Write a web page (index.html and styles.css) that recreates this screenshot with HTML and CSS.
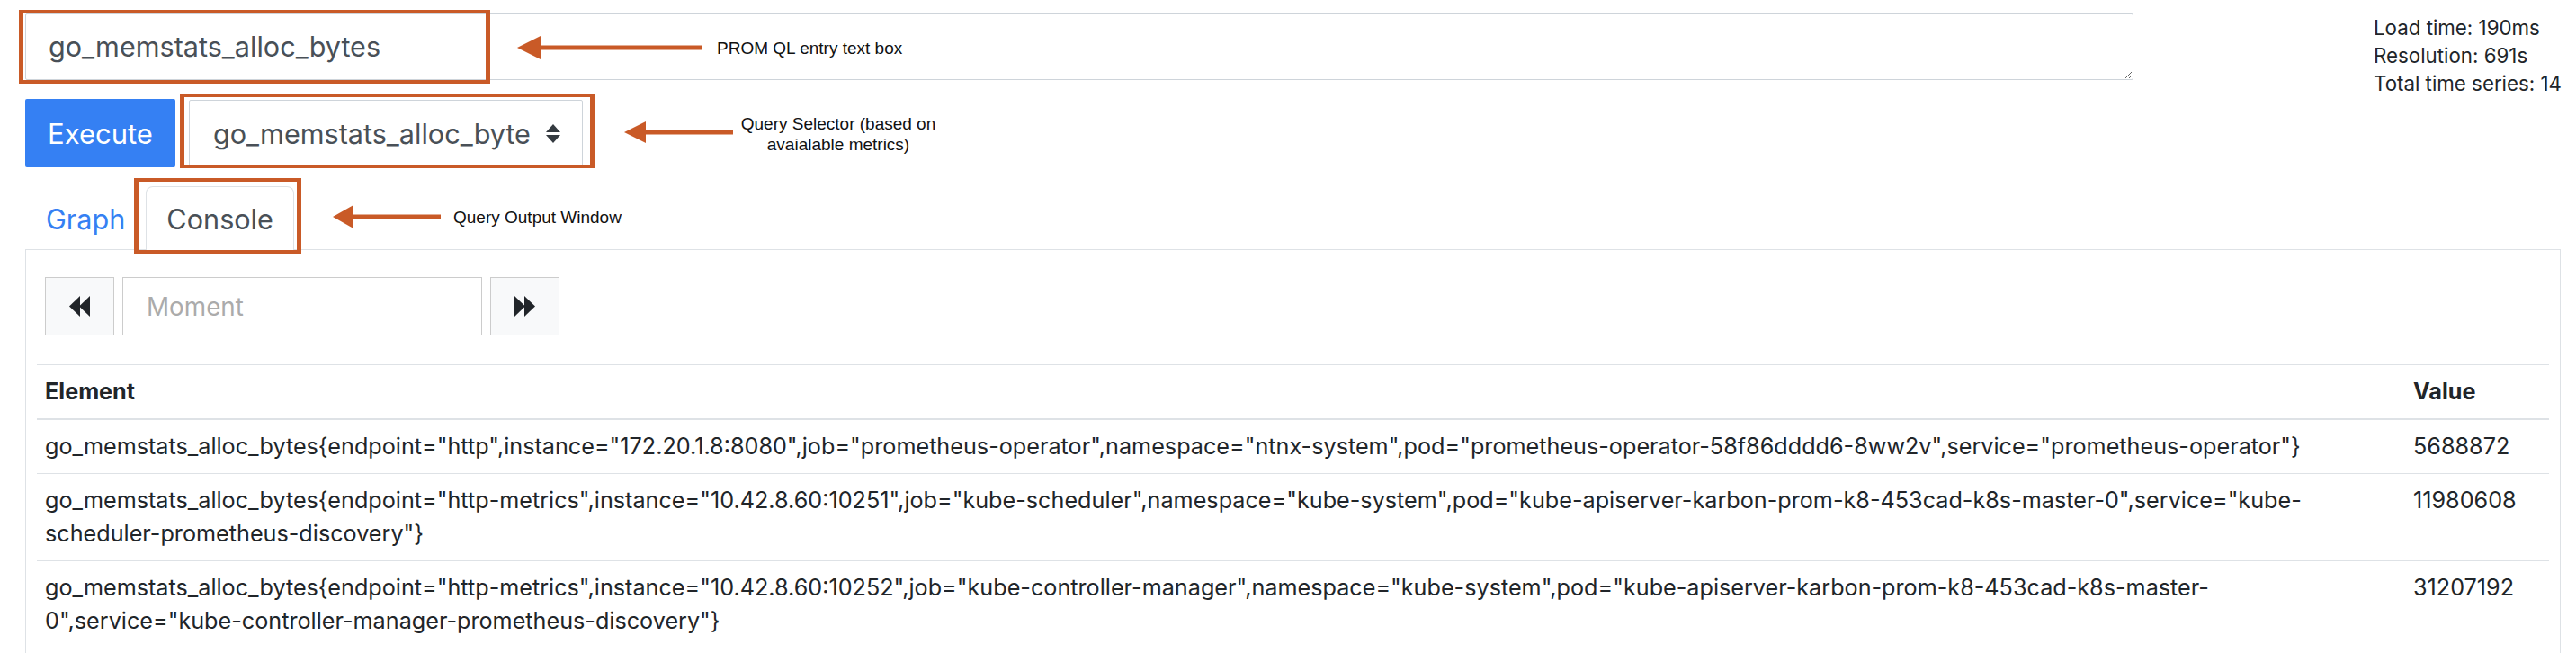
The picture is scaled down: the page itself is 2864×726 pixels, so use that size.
FILE: index.html
```html
<!DOCTYPE html>
<html lang="en">
<head>
<meta charset="utf-8">
<title>Prometheus console</title>
<link rel="stylesheet" href="styles.css">
</head>
<body>
<div class="page">
  <div class="top">
    <div class="main">
      <textarea class="expr" rows="1">go_memstats_alloc_bytes</textarea>
      <div class="exec-row">
        <button class="btn-exec">Execute</button>
        <div class="metric-select">
          <span class="metric-text">go_memstats_alloc_bytes</span>
          <svg class="sel-caret" width="16" height="21" viewBox="0 0 16 21"><polygon points="8,0 16,9 0,9"/><polygon points="0,12 16,12 8,21"/></svg>
        </div>
      </div>
    </div>
    <div class="stats">
      <div>Load time: 190ms</div>
      <div>Resolution: 691s</div>
      <div>Total time series: 14</div>
    </div>
  </div>

  <div class="tabs">
    <a class="tab">Graph</a>
    <a class="tab active">Console</a>
  </div>

  <div class="panel">
    <div class="moment-row">
      <button class="moment-btn"><svg width="23" height="23" viewBox="0 0 23 23"><polygon points="0,11.5 12,0 12,23"/><polygon points="11,11.5 23,0 23,23"/></svg></button>
      <input class="moment-input" placeholder="Moment">
      <button class="moment-btn"><svg width="23" height="23" viewBox="0 0 23 23"><polygon points="23,11.5 11,0 11,23"/><polygon points="12,11.5 0,0 0,23"/></svg></button>
    </div>
    <table class="results">
      <thead>
        <tr><th>Element</th><th class="val">Value</th></tr>
      </thead>
      <tbody>
        <tr><td>go_memstats_alloc_bytes{endpoint="http",instance="172.20.1.8:8080",job="prometheus-operator",namespace="ntnx-system",pod="prometheus-operator-58f86dddd6-8ww2v",service="prometheus-operator"}</td><td class="val">5688872</td></tr>
        <tr><td>go_memstats_alloc_bytes{endpoint="http-metrics",instance="10.42.8.60:10251",job="kube-scheduler",namespace="kube-system",pod="kube-apiserver-karbon-prom-k8-453cad-k8s-master-0",service="kube-scheduler-prometheus-discovery"}</td><td class="val">11980608</td></tr>
        <tr><td>go_memstats_alloc_bytes{endpoint="http-metrics",instance="10.42.8.60:10252",job="kube-controller-manager",namespace="kube-system",pod="kube-apiserver-karbon-prom-k8-453cad-k8s-master-0",service="kube-controller-manager-prometheus-discovery"}</td><td class="val">31207192</td></tr>
      </tbody>
    </table>
  </div>

  <div class="hl hl-expr"></div>
  <div class="hl hl-select"></div>
  <div class="hl hl-tab"></div>

  <svg class="arrow arrow-1" width="205" height="26" viewBox="0 0 205 26"><polygon points="0,13 26,0 26,26"/><rect x="24" y="10.5" width="181" height="5"/></svg>
  <svg class="arrow arrow-2" width="121" height="24" viewBox="0 0 121 24"><polygon points="0,12 24,0 24,24"/><rect x="22" y="9.5" width="99" height="5"/></svg>
  <svg class="arrow arrow-3" width="120" height="26" viewBox="0 0 120 26"><polygon points="0,13 23,0 23,26"/><rect x="21" y="10.5" width="99" height="5"/></svg>

  <div class="note note-1">PROM QL entry text box</div>
  <div class="note note-2">Query Selector (based on<br>avaialable metrics)</div>
  <div class="note note-3">Query Output Window</div>
</div>
</body>
</html>
```

FILE: styles.css
```css
* { box-sizing: border-box; }

html, body {
  margin: 0;
  background: #fff;
}

body {
  font-family: "Inter", "Liberation Sans", sans-serif;
  color: #212529;
}

.page {
  position: relative;
  width: 2864px;
  height: 726px;
  padding: 15px 0 0 28px;
  overflow: hidden;
}

.top {
  display: flex;
}

.main {
  width: 2344px;
  flex: none;
}

.expr {
  display: block;
  width: 100%;
  height: 74px;
  margin: 0;
  padding: 17px 25px 0;
  border: 1px solid #ced4da;
  border-radius: 2px;
  font-family: inherit;
  font-size: 30.6px;
  line-height: 38px;
  color: #495057;
  resize: vertical;
  outline: none;
}

.exec-row {
  display: flex;
  margin-top: 21px;
}

.btn-exec {
  width: 167px;
  height: 76px;
  padding: 0;
  border: none;
  border-radius: 2px;
  background: #3580f3;
  color: #fff;
  font-family: inherit;
  font-size: 31px;
}

.metric-select {
  display: flex;
  align-items: center;
  width: 438px;
  height: 74px;
  margin: 1px 0 0 15px;
  padding-left: 26px;
  border: 1px solid #ced4da;
  border-radius: 2px;
  font-size: 30.6px;
  color: #495057;
}

.metric-text {
  width: 354px;
  overflow: hidden;
  white-space: nowrap;
}

.sel-caret {
  margin-left: 16px;
  fill: #343a40;
}

.stats {
  width: 225px;
  margin-left: 267px;
  font-size: 22.3px;
  line-height: 31px;
  color: #212529;
}

.tabs {
  display: flex;
  height: 70px;
  margin-top: 21px;
}

.tab {
  display: flex;
  align-items: center;
  height: 71px;
  padding: 0 22px;
  border: 1px solid transparent;
  border-bottom: none;
  border-radius: 8px 8px 0 0;
  font-size: 30.6px;
  color: #3580f3;
  text-decoration: none;
}

.tab.active {
  position: relative;
  z-index: 1;
  background: #fff;
  border-color: #dee2e6;
  color: #495057;
}

.panel {
  width: 2819px;
  padding: 12px;
  border: 1px solid #dee2e6;
  min-height: 460px;
}

.moment-row {
  display: flex;
  gap: 9px;
  margin: 18px 0 0 9px;
  height: 65px;
}

.moment-btn {
  display: flex;
  align-items: center;
  justify-content: center;
  width: 77px;
  height: 65px;
  padding: 0;
  border: 1px solid #ccc;
  background: #f8f9fa;
}

.moment-btn svg {
  fill: #212529;
}

.moment-input {
  width: 400px;
  height: 65px;
  padding: 0 0 0 26px;
  border: 1px solid #ccc;
  font-family: inherit;
  font-size: 27.8px;
  color: #495057;
  outline: none;
}

.moment-input::placeholder {
  color: #ababab;
}

.results {
  width: 100%;
  margin-top: 32px;
  border-collapse: collapse;
  font-size: 25.2px;
  line-height: 37px;
}

.results th,
.results td {
  padding: 11px 12px 11px 9px;
  border-top: 1px solid #dee2e6;
  text-align: left;
  vertical-align: top;
}

.results thead th {
  border-bottom: 2px solid #dee2e6;
  font-weight: 700;
}

.results .val {
  width: 163px;
  padding-left: 12px;
}

.hl {
  position: absolute;
  border: 4px solid #c95a27;
  border-left-width: 5px;
  border-right-width: 5px;
}

.hl-expr { left: 21px; top: 11px; width: 524px; height: 82px; }
.hl-select { left: 200px; top: 104px; width: 461px; height: 83px; }
.hl-tab { left: 149px; top: 198px; width: 186px; height: 84px; }

.arrow {
  position: absolute;
  fill: #c95a27;
}

.arrow-1 { left: 575px; top: 40px; }
.arrow-2 { left: 694px; top: 135px; }
.arrow-3 { left: 370px; top: 228px; }

.note {
  position: absolute;
  font-family: "Liberation Sans", Arial, sans-serif;
  font-size: 19px;
  line-height: 23px;
  color: #111;
  white-space: nowrap;
}

.note-1 { left: 797px; top: 42px; }
.note-2 { left: 812px; top: 126px; width: 240px; text-align: center; }
.note-3 { left: 504px; top: 230px; }
```
